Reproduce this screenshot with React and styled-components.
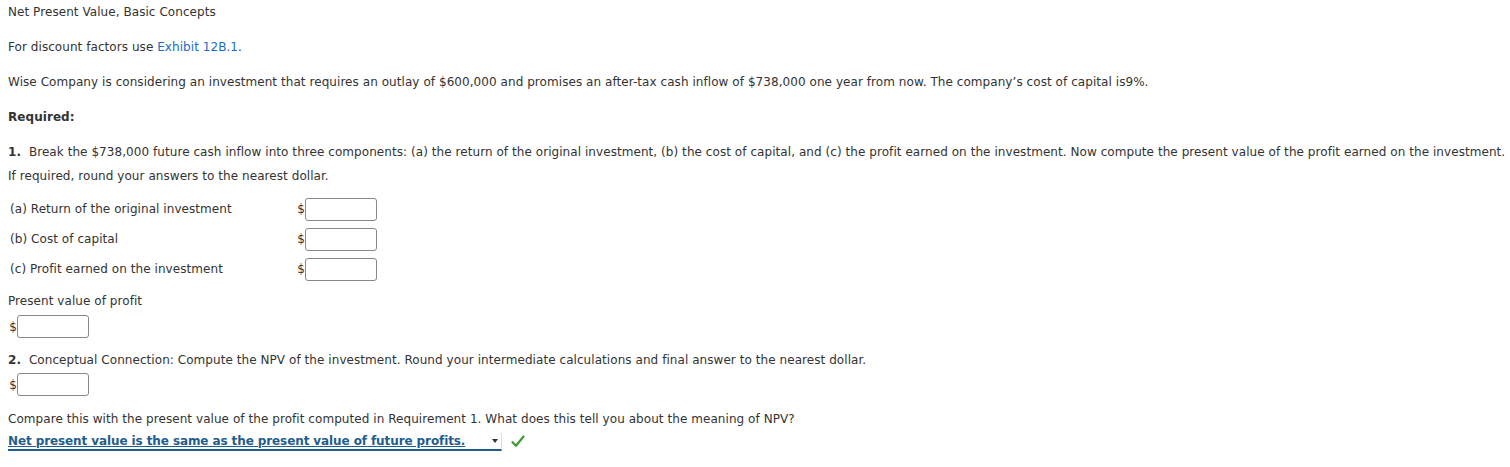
import React from 'react';
import styled, { createGlobalStyle } from 'styled-components';

const GlobalStyle = createGlobalStyle`
    html, body {
        margin: 0;
        padding: 0;
        background: #fff;
    }
    body {
        font-family: "DejaVu Sans", Verdana, sans-serif;
        font-size: 12px;
        letter-spacing: 0.06px;
        color: #333;
    }
`;

const Page = styled.div`
    padding: 0 8px;
    width: 1510px;
    box-sizing: border-box;
`;

const P = styled.p`
    margin: 0 0 ${props => props.$gap ?? 11}px;
    line-height: 24px;
    white-space: nowrap;
`;

const Link = styled.a`
    color: #1b6ec2;
    text-decoration: none;
`;

const Num = styled.b`
    font-weight: bold;
    margin-right: 4px;
`;

const Rows = styled.div`
    display: flex;
    flex-direction: column;
    margin: 6px 0 5px 2px;
`;

const Row = styled.div`
    display: flex;
    align-items: center;
    height: 30px;
`;

const Label = styled.span`
    width: 286px;
`;

const Dollar = styled.span`
    color: #333;
    width: 9px;
    text-align: right;
`;

const Input = styled.input`
    box-sizing: border-box;
    width: 72px;
    height: 23px;
    border: 1px solid #888;
    border-radius: 3px;
    margin: 0;
    padding: 0 4px;
    background: #fff;
    outline: none;
`;

const AnswerLine = styled.div`
    display: flex;
    align-items: center;
    margin-bottom: ${props => props.$gap ?? 0}px;
`;

const SelectRow = styled.div`
    display: flex;
    align-items: center;
    gap: 9px;
`;

const Select = styled.div`
    display: flex;
    align-items: center;
    justify-content: space-between;
    width: 494px;
    height: 19px;
    box-sizing: border-box;
    border: 1px solid #ddd;
    border-top: none;
    border-left: none;
    border-bottom: 2px solid #1f5d8c;
    border-radius: 0 3px 0 0;
    font-weight: bold;
    font-size: 12px;
    letter-spacing: -0.1px;
    color: #1f5d8c;
    white-space: nowrap;
    padding-right: 3px;
`;

const SelectText = styled.span`
    text-decoration: underline;
`;

const Caret = styled.span`
    width: 0;
    height: 0;
    border-left: 3px solid transparent;
    border-right: 3px solid transparent;
    border-top: 4px solid #333;
`;

const Check = () => (
    <svg width="14" height="13" viewBox="0 0 14 13">
        <path d="M1.5 7.2 L5 10.8 L12.5 1.5" fill="none" stroke="#3c9a35" strokeWidth="2.2" strokeLinecap="round" strokeLinejoin="round" />
    </svg>
);

const App = () => {
    return (
        <Page>
            <GlobalStyle />
            <P>Net Present Value, Basic Concepts</P>
            <P>For discount factors use <Link href="#">Exhibit 12B.1</Link>.</P>
            <P>Wise Company is considering an investment that requires an outlay of $600,000 and promises an after-tax cash inflow of $738,000 one year from now. The company’s cost of capital is9%.</P>
            <P><b>Required:</b></P>
            <P $gap={0}><Num>1.</Num> Break the $738,000 future cash inflow into three components: (a) the return of the original investment, (b) the cost of capital, and (c) the profit earned on the investment. Now compute the present value of the profit earned on the investment.</P>
            <P $gap={0}>If required, round your answers to the nearest dollar.</P>
            <Rows>
                <Row><Label>(a) Return of the original investment</Label><Dollar>$</Dollar><Input /></Row>
                <Row><Label>(b) Cost of capital</Label><Dollar>$</Dollar><Input /></Row>
                <Row><Label>(c) Profit earned on the investment</Label><Dollar>$</Dollar><Input /></Row>
            </Rows>
            <P $gap={2}>Present value of profit</P>
            <AnswerLine $gap={10}><Dollar>$</Dollar><Input /></AnswerLine>
            <P $gap={1}><Num>2.</Num> Conceptual Connection: Compute the NPV of the investment. Round your intermediate calculations and final answer to the nearest dollar.</P>
            <AnswerLine $gap={11}><Dollar>$</Dollar><Input /></AnswerLine>
            <P $gap={1}>Compare this with the present value of the profit computed in Requirement 1. What does this tell you about the meaning of NPV?</P>
            <SelectRow>
                <Select><SelectText>Net present value is the same as the present value of future profits.</SelectText><Caret /></Select>
                <Check />
            </SelectRow>
        </Page>
    );
};

export default App;
